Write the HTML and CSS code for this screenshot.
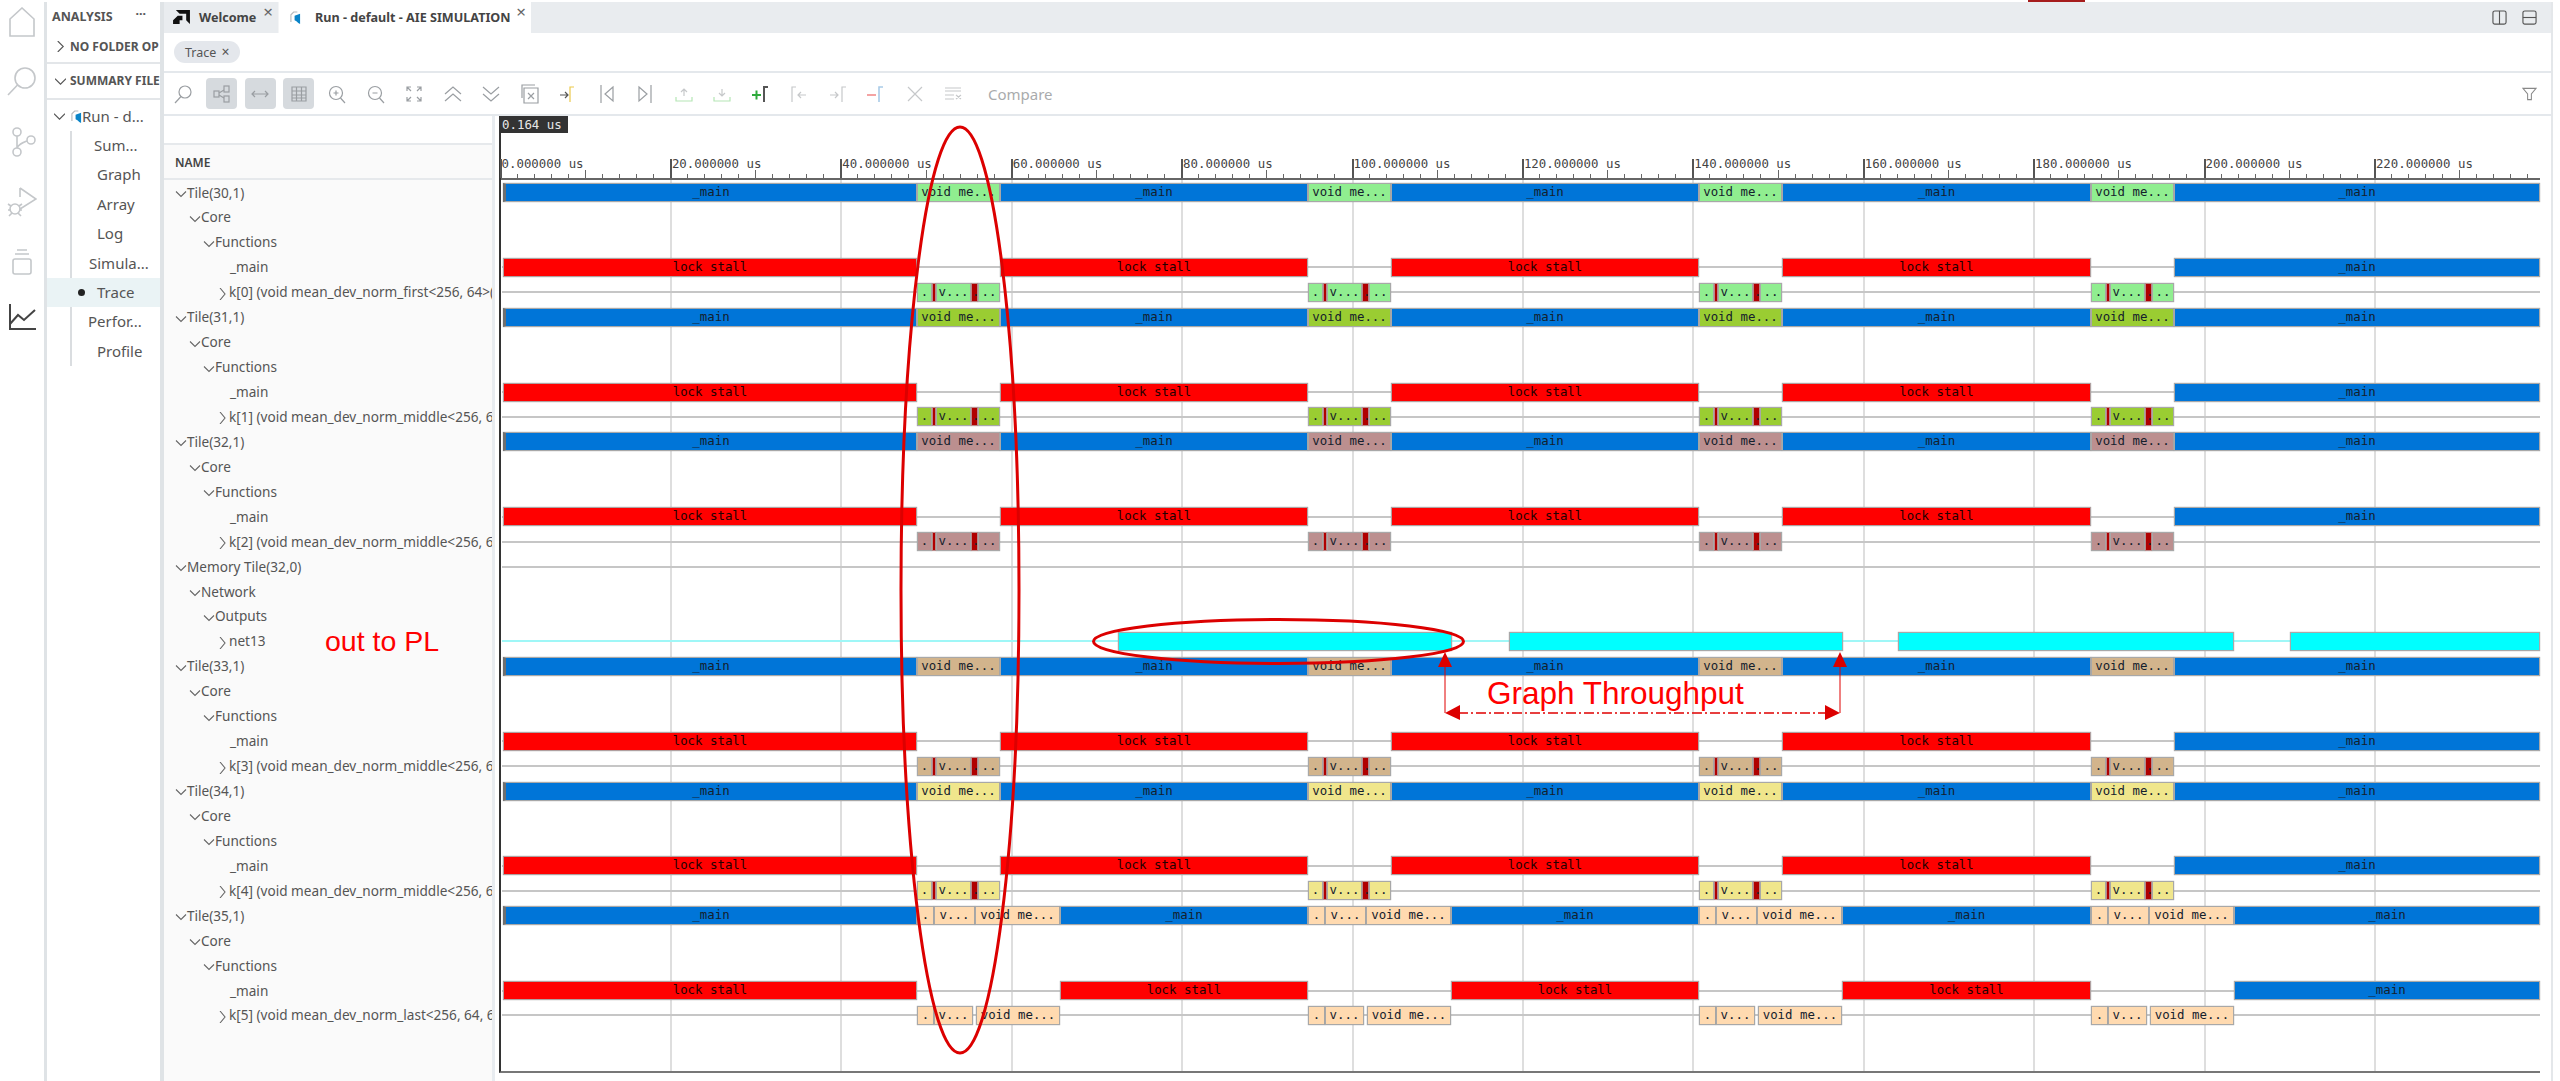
FILE: index.html
```html
<!DOCTYPE html>
<html lang="en">
<head>
    <meta charset="UTF-8">
    <title>Run - default - AIE SIMULATION</title>
    <link rel="stylesheet" href="styles.css">
</head>
<body>
    <div class="strip"><span class="strip-mark"></span></div>

    <div class="app">
        <!-- activity bar -->
        <nav class="activity">
            <svg class="act-icon" viewBox="0 0 30 30"><path d="M3 12 15 1l12 11v17H3z"/></svg>
            <svg class="act-icon" viewBox="0 0 30 30"><circle cx="18" cy="11" r="10"/><path d="M10.500 18 1 28"/></svg>
            <svg class="act-icon" viewBox="0 0 30 30"><circle cx="10" cy="5" r="4"/><circle cx="10" cy="25" r="4"/><circle cx="24" cy="13" r="4"/><path d="M10 9v12M20 14c-5 2-8 3-10 7"/></svg>
            <svg class="act-icon" viewBox="0 0 30 30"><path d="M13 1l16 11-16 10M13 1v9"/><circle cx="8" cy="22" r="5"/><path d="M1 17l3 2M1 23h3M2 29l3-3M15 17l-3 2M15 23h-3M14 29l-3-3"/></svg>
            <svg class="act-icon" viewBox="0 0 30 30"><rect x="6" y="12" width="18" height="15" rx="2"/><path d="M8 7h14M10 3h10"/></svg>
            <svg class="act-icon act-on" viewBox="0 0 30 30"><path d="M3 1v25h26M3 21l8-9 6 5 11-10"/></svg>
        </nav>

        <!-- explorer -->
        <aside class="side">
            <div class="side-title"><span>ANALYSIS</span><span class="side-more">···</span></div>
            <div class="side-sec side-sec-a">
                <svg class="chev" viewBox="0 0 12 12"><path d="M3 0l6 6-6 6"/></svg>
                <span class="sec-name">NO FOLDER OP</span>
            </div>
            <div class="side-sec side-sec-b">
                <svg class="chev" viewBox="0 0 12 12"><path d="M0 3l6 6 6-6"/></svg>
                <span class="sec-name">SUMMARY FILE</span>
            </div>
            <div class="side-run">
                <svg class="chev" viewBox="0 0 12 12"><path d="M0 3l6 6 6-6"/></svg>
                <svg class="run-icon" viewBox="0 0 12 14"><path class="run-back" d="M1 12V4l3-3h4"/><path class="run-blue" d="M5 5l6-2v11l-2-1-2-2-2-1z"/></svg>
                <span>Run - d...</span>
            </div>
            <ul class="side-list">
                <li class="side-item i-sum">Sum...</li>
                <li class="side-item">Graph</li>
                <li class="side-item">Array</li>
                <li class="side-item">Log</li>
                <li class="side-item i-sim">Simula...</li>
                <li class="side-item is-active">Trace</li>
                <li class="side-item i-per">Perfor...</li>
                <li class="side-item">Profile</li>
            </ul>
        </aside>

        <main class="main">
            <div class="tabs">
                <div class="tab tab-welcome">
                    <svg class="amd" viewBox="0 0 18 16"><path d="M3 0h15v15l-4-4V4H7z"/><path d="M0 11l5-5h5v5l-3 0v4H0z"/></svg>
                    <span>Welcome</span>
                    <span class="tab-x">×</span>
                </div>
                <div class="tab tab-run">
                    <svg class="run-icon" viewBox="0 0 12 14"><path class="run-back" d="M1 12V4l3-3h4"/><path class="run-blue" d="M5 5l6-2v11l-2-1-2-2-2-1z"/></svg>
                    <span>Run - default - AIE SIMULATION</span>
                    <span class="tab-x">×</span>
                </div>
                <div class="tab-actions">
                    <svg class="tab-act" viewBox="0 0 16 16"><rect x="1" y="1" width="14" height="14" rx="2"/><path d="M8 1v14"/></svg>
                    <svg class="tab-act" viewBox="0 0 16 16"><rect x="1" y="1" width="14" height="14" rx="2"/><path d="M1 8h14"/></svg>
                </div>
            </div>

            <div class="subtabs">
                <div class="chip">Trace <span class="chip-x">×</span></div>
            </div>

            <div class="toolbar">
                <button class="tool"><svg viewBox="0 0 20 20"><circle cx="12" cy="8" r="6"/><path d="M8 12.500 2 19"/></svg></button>
                <button class="tool is-on"><svg viewBox="0 0 20 20"><rect x="2" y="7" width="5" height="6"/><rect x="12" y="2" width="5" height="6"/><rect x="12" y="12" width="5" height="6"/><path d="M7 9l5-3M7 11l5 3"/></svg></button>
                <button class="tool is-on"><svg viewBox="0 0 20 20"><path d="M2 10h16M5 7l-3 3 3 3M15 7l3 3-3 3"/></svg></button>
                <button class="tool is-on"><svg viewBox="0 0 20 20"><path d="M3 3h14v14H3zM3 7h14M3 11h14M3 14h14M7.500 3v14M12.500 3v14"/></svg></button>
                <button class="tool"><svg viewBox="0 0 20 20"><circle cx="9" cy="9" r="6.500"/><path d="M13.500 14 18 19M9 6.500v5M6.500 9h5"/></svg></button>
                <button class="tool"><svg viewBox="0 0 20 20"><circle cx="9" cy="9" r="6.500"/><path d="M13.500 14 18 19M6.500 9h5"/></svg></button>
                <button class="tool"><svg viewBox="0 0 20 20"><path d="M3 7V3h4M13 3h4v4M3 13v4h4M17 13v4h-4M3 3l4 4M17 3l-4 4M3 17l4-4M17 17l-4-4"/></svg></button>
                <button class="tool"><svg viewBox="0 0 20 20"><path d="M2 10l8-7 8 7M2 17l8-7 8 7"/></svg></button>
                <button class="tool"><svg viewBox="0 0 20 20"><path d="M2 3l8 7 8-7M2 10l8 7 8-7"/></svg></button>
                <button class="tool"><svg viewBox="0 0 20 20"><path d="M2 14V1h13M4 19V4h14v15zM8 9l6 6M14 9l-6 6"/></svg></button>
                <button class="tool"><svg viewBox="0 0 20 20"><path class="ink" d="M2 11h8M7 8l3 3-3 3"/><path class="yel" d="M12 18V3h4"/></svg></button>
                <button class="tool"><svg viewBox="0 0 20 20"><path d="M4 1v18M16 3 8 10l8 7z"/></svg></button>
                <button class="tool"><svg viewBox="0 0 20 20"><path d="M16 1v18M4 3l8 7-8 7z"/></svg></button>
                <button class="tool is-off"><svg viewBox="0 0 20 20"><path class="grn" d="M2 13v4h16v-4"/><path d="M10 12V5M7 8l3-3 3 3"/></svg></button>
                <button class="tool is-off"><svg viewBox="0 0 20 20"><path class="grn" d="M2 13v4h16v-4"/><path d="M10 5v7M7 9l3 3 3-3"/></svg></button>
                <button class="tool"><svg viewBox="0 0 20 20"><path class="grn-b" d="M1 11h9M5.500 6.500v9"/><path class="ink thick" d="M13 18V3h4"/></svg></button>
                <button class="tool is-off"><svg viewBox="0 0 20 20"><path d="M3 18V3h4M17 11H9M12 8l-3 3 3 3"/></svg></button>
                <button class="tool is-off"><svg viewBox="0 0 20 20"><path d="M2 11h8M7 8l3 3-3 3M14 18V3h4"/></svg></button>
                <button class="tool is-off"><svg viewBox="0 0 20 20"><path class="red" d="M1 11h9"/><path class="blu" d="M13 18V3h4"/></svg></button>
                <button class="tool is-off"><svg viewBox="0 0 20 20"><path d="M3 3l14 14M17 3 3 17"/></svg></button>
                <button class="tool is-off"><svg viewBox="0 0 20 20"><path d="M2 4h16M2 7h16M2 11h9M2 15h9M13 11l5 4M18 11l-5 4"/></svg></button>
                <span class="compare">Compare</span>
                <svg class="filter" viewBox="0 0 16 14"><path d="M1 1h14L10 7v6H6V7z"/></svg>
            </div>

            <div class="trace">
                <div class="names">
                    <div class="names-blank"></div>
                    <div class="names-head">NAME</div>
                    <div id="tree"></div>
                </div>
                <div class="wave">
                    <div class="plot">
                        <div class="stamp">0.164 us</div>
                        <div class="ruler" id="ruler"></div>
                        <div id="grid"></div>
                        <div id="rows"></div>
                    </div>
                </div>
            </div>
        </main>
    </div>

    <!-- hand drawn notes on top of the capture -->
    <svg class="notes" viewBox="0 0 2560 1081">
        <ellipse class="note-oval" cx="960" cy="590" rx="59" ry="463"/>
        <ellipse class="note-oval" cx="1278.500" cy="641.500" rx="185" ry="22"/>
        <path class="note-thin" d="M1445 660V713M1840 660V713"/>
        <path class="note-dash" d="M1458 713H1828"/>
        <path class="note-head" d="M1445 652l-7 15h14zM1840 652l-7 15h14zM1445 713l15-8v15zM1840 713l-15-8v15z"/>
        <text class="note-text note-big" x="1487" y="704">Graph Throughput</text>
        <text class="note-text note-small" x="325" y="651">out to PL</text>
    </svg>

    <script src="app.js"></script>
</body>
</html>
```

FILE: styles.css
```css
* {
    box-sizing: border-box;
}

html, body {
    margin: 0;
    height: 100%;
}

body {
    width: 2560px;
    height: 1081px;
    overflow: hidden;
    position: relative;
    background-color: #fff;
    font-family: "Noto Sans", sans-serif;
    color: #555;
    display: flex;
    flex-direction: column;
}

.strip {
    height: 2px;
    flex: none;
}

.strip-mark {
    display: block;
    width: 57px;
    height: 2px;
    margin-left: 2028px;
    background-color: #a61c1c;
}

.app {
    flex: 1;
    display: flex;
    min-height: 0;
}

/* activity bar */
.activity {
    width: 47px;
    flex: none;
    border-right: 3px solid #dfe3e6;
    display: flex;
    flex-direction: column;
    align-items: center;
    gap: 30px;
    padding-top: 5px;
}

.act-icon {
    width: 30px;
    height: 30px;
    fill: none;
    stroke: #c4c7ca;
    stroke-width: 1.6;
}

.act-on {
    stroke: #444;
    stroke-width: 2;
    margin-top: -4px;
}

/* explorer */
.side {
    width: 117px;
    flex: none;
    border-right: 4px solid #dfe3e6;
    overflow: hidden;
}

.side-title {
    height: 29px;
    padding: 0 0 0 5px;
    display: flex;
    align-items: center;
    font-size: 12.500px;
    font-weight: 700;
    line-height: 16px;
    color: #555;
}

.side-more {
    margin-left: 23px;
    margin-top: -5px;
    letter-spacing: 0;
}

.side-sec {
    display: flex;
    align-items: center;
    gap: 4px;
    padding-left: 8px;
    font-size: 12px;
    font-weight: 700;
    line-height: 16px;
    white-space: nowrap;
    overflow: hidden;
    border-bottom: 2px solid #e3e6e9;
}

.side-sec-a {
    height: 33px;
}

.side-sec-b {
    height: 36px;
}

.chev {
    width: 11px;
    height: 11px;
    flex: none;
    fill: none;
    stroke: #555;
    stroke-width: 1.200;
}

.side-run {
    height: 31px;
    padding-left: 7px;
    padding-top: 1px;
    display: flex;
    align-items: center;
    gap: 6px;
    font-size: 15px;
}

.run-icon {
    width: 11px;
    height: 13px;
    flex: none;
}

.side-run .run-icon {
    margin-right: -6px;
}

.run-back {
    fill: none;
    stroke: #b5b8bb;
    stroke-width: 1.200;
}

.run-blue {
    fill: #0a84c8;
}

.side-list {
    list-style: none;
    margin: 0 0 0 23px;
    padding: 0;
    border-left: 2px solid #dadde0;
    font-size: 15px;
    height: 235px;
}

.side-item {
    height: 29.400px;
    line-height: 29.400px;
    padding-left: 25px;
    white-space: nowrap;
    position: relative;
}

.i-sum { padding-left: 22px; }
.i-sim { padding-left: 17px; }
.i-per { padding-left: 16px; }

.side-item.is-active {
    background-color: #eaf3f5;
    margin-left: -25px;
    padding-left: 50px;
}

/* selected marker */
.side-item.is-active::before {
    content: "";
    position: absolute;
    left: 31px;
    top: 11px;
    width: 7px;
    height: 7px;
    border-radius: 50%;
    background-color: #222;
}

/* main area */
.main {
    width: 2389px;
    flex: none;
    border-right: 2px solid #e4e7ea;
    display: flex;
    flex-direction: column;
}

.tabs {
    height: 31px;
    flex: none;
    display: flex;
    background-color: #e9ecef;
}

.tab {
    display: flex;
    align-items: center;
    font-size: 12.600px;
    font-weight: 700;
    color: #444;
    position: relative;
}

.tab-welcome {
    width: 115px;
    padding-left: 9px;
    gap: 9px;
    border-right: 1px solid #f4f5f6;
}

.tab-run {
    width: 252px;
    background-color: #fff;
    padding-left: 11px;
    gap: 14px;
}

.amd {
    width: 17px;
    height: 15px;
    fill: #111;
}

.tab-x {
    position: absolute;
    right: 5px;
    top: -2px;
    font-size: 17px;
    font-weight: 400;
    color: #666;
}

.tab-actions {
    margin-left: auto;
    display: flex;
    align-items: center;
    gap: 15px;
    padding-right: 14px;
}

.tab-act {
    width: 15px;
    height: 15px;
    fill: none;
    stroke: #555;
    stroke-width: 1.200;
}

.subtabs {
    height: 40px;
    flex: none;
    padding: 8px 0 0 10px;
    border-bottom: 2px solid #e4e8ec;
}

.chip {
    width: 66px;
    height: 22px;
    border-radius: 11px;
    background-color: #e4e7ec;
    font-size: 12.500px;
    line-height: 22px;
    padding-left: 11px;
    color: #555;
}

.chip-x {
    font-size: 14px;
    margin-left: 2px;
}

.toolbar {
    height: 43px;
    flex: none;
    display: flex;
    align-items: center;
    gap: 7.500px;
    padding-left: 3.500px;
    border-bottom: 2px solid #e4e8ec;
}

.tool {
    width: 31px;
    height: 31px;
    flex: none;
    padding: 0;
    border: 0;
    border-radius: 4px;
    background: none;
    display: flex;
    align-items: center;
    justify-content: center;
}

.tool.is-on {
    background-color: #d6dade;
}

.tool svg {
    width: 20px;
    height: 20px;
    fill: none;
    stroke: #9a9ea2;
    stroke-width: 1.200;
}

.tool.is-off svg {
    stroke: #c6c8ca;
}

.tool svg .ink { stroke: #555; }
.tool svg .thick { stroke-width: 2; }
.tool svg .yel { stroke: #ecc94b; }
.tool svg .grn { stroke: #b5e6b5; }
.tool svg .grn-b { stroke: #2eaa3c; stroke-width: 2; }
.tool svg .red { stroke: #f4a3a3; stroke-width: 2; }
.tool svg .blu { stroke: #a9cbe8; stroke-width: 1.600; }

.compare {
    margin-left: 12px;
    font-size: 15px;
    color: #a9abad;
}

.filter {
    margin-left: auto;
    margin-right: 14px;
    width: 15px;
    height: 14px;
    fill: none;
    stroke: #888;
    stroke-width: 1.100;
}

/* trace view */
.trace {
    flex: 1;
    display: flex;
    min-height: 0;
}

.names {
    width: 331px;
    flex: none;
    background-color: #fafafa;
    border-right: 3px solid #e8ecf0;
    overflow: hidden;
}

.names-blank {
    height: 29px;
    background-color: #fff;
    border-bottom: 2px solid #e6e9ec;
}

.names-head {
    height: 35px;
    line-height: 35px;
    padding-left: 11px;
    font-size: 12px;
    font-weight: 600;
    color: #444;
    border-bottom: 2px solid #e6e9ec;
}

.node {
    height: 24.950px;
    line-height: 24.950px;
    display: flex;
    align-items: center;
    white-space: nowrap;
    font-size: 13.600px;
    color: #555;
    overflow: hidden;
    padding-top: 1px;
}

.depth-0 { padding-left: 11px; }
.depth-1 { padding-left: 25px; }
.depth-2 { padding-left: 39px; }
.depth-3 { padding-left: 54px; }

.node-chev {
    width: 12px;
    height: 12px;
    flex: none;
    fill: none;
    stroke: #666;
    stroke-width: 1.100;
    margin-top: 2px;
}

.node-chev-r {
    width: 9px;
    margin-right: 2px;
}

.node-gap {
    width: 12px;
    flex: none;
}

.wave {
    flex: 1;
    min-width: 0;
}

/* x values in app.js are page pixels minus the plot origin */
.plot {
    position: relative;
    width: 2041px;
    height: 957px;
    margin-left: 4px;
    border-left: 2px solid #333;
    border-bottom: 2px solid #777;
    font-family: "DejaVu Sans Mono", monospace;
    font-size: 12.400px;
}

.stamp {
    position: absolute;
    left: -2px;
    top: 0;
    width: 69px;
    height: 17px;
    line-height: 17px;
    padding-left: 3px;
    background-color: #333;
    color: #e8e8e8;
    white-space: nowrap;
}

.ruler {
    position: relative;
    height: 64px;
    border-bottom: 2px solid #666;
}

.tick {
    position: absolute;
    bottom: 0;
    width: 1px;
    height: 4px;
    background-color: #666;
}

.tick-mid {
    height: 8px;
}

.tick-major {
    width: 2px;
    height: 19px;
    background-color: #555;
}

.tick-label {
    position: absolute;
    top: 40px;
    color: #444;
    white-space: nowrap;
}

.grid-line {
    position: absolute;
    top: 64px;
    bottom: 0;
    width: 2px;
    background-color: #dedede;
}

.row {
    position: relative;
    height: 24.950px;
}

.wire {
    position: absolute;
    left: 1px;
    right: 0;
    top: 11.500px;
    height: 2px;
    background-color: #c6c6c6;
}

.wire-net {
    background-color: #9ff7f7;
}

.bar {
    position: absolute;
    top: 3px;
    height: 19px;
    line-height: 15px;
    border: 1px solid #a8a8a8;
    box-shadow: 0 0 1px #999;
    text-align: center;
    white-space: nowrap;
    overflow: hidden;
    color: #14202c;
}

.bar-main { background-color: #0075d8; }
.bar-first { border-left: 3px solid #6f6f6f; }
.bar-lock { background-color: #f00; border-color: #b0a0a0; color: #200; }
.bar-net { background-color: #0ff; }
.bar-stop { background-color: #b00000; border-color: #b88; }

.c-30 { background-color: #90ee90; }
.c-31 { background-color: #9acd32; }
.c-32 { background-color: #bc8f8f; }
.c-33 { background-color: #d2b48c; }
.c-34 { background-color: #f0e68c; }
.c-35 { background-color: #ffdab0; }

/* notes */
.notes {
    position: absolute;
    left: 0;
    top: 0;
    width: 2560px;
    height: 1081px;
    pointer-events: none;
}

.note-oval {
    fill: none;
    stroke: #dc0000;
    stroke-width: 3;
}

.note-thin {
    fill: none;
    stroke: #e00000;
    stroke-width: 1;
}

.note-dash {
    fill: none;
    stroke: #e00000;
    stroke-width: 1.500;
    stroke-dasharray: 10 3 2 3;
}

.note-head {
    fill: #dc0000;
}

.note-text {
    fill: #f00;
    font-family: "Liberation Sans", sans-serif;
}

.note-big {
    font-size: 31.500px;
}

.note-small {
    font-size: 28.500px;
}
```

FILE: app.js
```js
// plot origin in page pixels, all x values below are page pixels
var ORIGIN = 501;
var US = 8.52;
var ZERO = 499.5;

// start of each iteration of the graph
var STARTS = [917, 1308, 1699, 2091];
var WIDTH = 83;
var END = 2540;

var CHEV_D = '<svg class="node-chev" viewBox="0 0 12 12"><path d="M1 3.500l5 5 5-5"/></svg>';
var CHEV_R = '<svg class="node-chev node-chev-r" viewBox="0 0 9 12"><path d="M2 0l5 6-5 6"/></svg>';

var tree = document.getElementById('tree');
var rows = document.getElementById('rows');
var ruler = document.getElementById('ruler');
var grid = document.getElementById('grid');

function place(el, x0, x1) {
    el.style.left = (x0 - ORIGIN) + 'px';
    if (x1 !== undefined) {
        el.style.width = (x1 - x0) + 'px';
    }
}

function addNode(depth, label, arrow) {
    var node = document.createElement('div');
    node.className = 'node depth-' + depth;
    var head = '<span class="node-gap"></span>';
    if (arrow === 'down') head = CHEV_D;
    if (arrow === 'right') head = CHEV_R;
    node.innerHTML = head + '<span></span>';
    node.lastChild.textContent = label;
    tree.appendChild(node);
}

function addRow() {
    var row = document.createElement('div');
    row.className = 'row';
    rows.appendChild(row);
    return row;
}

function addBar(row, cls, x0, x1, label) {
    var bar = document.createElement('div');
    bar.className = 'bar ' + cls;
    bar.textContent = label || '';
    place(bar, x0, x1);
    row.appendChild(bar);
}

function addWire(row, cls) {
    var wire = document.createElement('div');
    wire.className = 'wire ' + (cls || '');
    row.appendChild(wire);
}

// last tile has a longer kernel, it runs up to 1060
function tileRows(id, kernel, last) {
    var color = 'c-' + id;
    var span = last ? 143 : WIDTH;

    addNode(0, 'Tile(' + id + ',1)', 'down');
    addNode(1, 'Core', 'down');
    addNode(2, 'Functions', 'down');
    addNode(3, '_main');
    addNode(3, kernel, 'right');

    // tile row
    var top = addRow();
    var x = 503;
    STARTS.forEach(function (s, i) {
        addBar(top, 'bar-main' + (i === 0 ? ' bar-first' : ''), x, s, '_main');
        if (last) {
            addBar(top, color, s, s + 17, '.');
            addBar(top, color, s + 17, s + 58, 'v...');
            addBar(top, color, s + 58, s + span, 'void me...');
        } else {
            addBar(top, color, s, s + span, 'void me...');
        }
        x = s + span;
    });
    addBar(top, 'bar-main', x, END, '_main');

    addRow();
    addRow();

    // _main row
    var stall = addRow();
    addWire(stall);
    x = 503;
    STARTS.forEach(function (s) {
        addBar(stall, 'bar-lock', x, s, 'lock stall');
        x = s + span;
    });
    addBar(stall, 'bar-main', x, END, '_main');

    // kernel row
    var kern = addRow();
    addWire(kern);
    STARTS.forEach(function (s) {
        if (last) {
            addBar(kern, color, s, s + 17, '.');
            addBar(kern, color, s + 17, s + 56, 'v...');
            addBar(kern, color, s + 59, s + span, 'void me...');
        } else {
            addBar(kern, color, s, s + 15, '.');
            addBar(kern, 'bar-stop', s + 15, s + 19);
            addBar(kern, color, s + 19, s + 54, 'v...');
            addBar(kern, 'bar-stop', s + 54, s + 61, '.');
            addBar(kern, color, s + 61, s + span, '..');
        }
    });
}

function memoryRows() {
    addNode(0, 'Memory Tile(32,0)', 'down');
    addNode(1, 'Network', 'down');
    addNode(2, 'Outputs', 'down');
    addNode(3, 'net13', 'right');

    addWire(addRow());
    addRow();
    addRow();

    var net = addRow();
    addWire(net, 'wire-net');
    [[1118, 1452], [1509, 1843], [1898, 2234], [2290, END]].forEach(function (b) {
        addBar(net, 'bar-net', b[0], b[1]);
    });
}

// time axis
for (var t = 0; t <= 239; t += 2) {
    var x = ZERO + US * t;
    var tick = document.createElement('div');
    tick.className = 'tick';
    if (t % 20 === 0) {
        tick.className += ' tick-major';
        var label = document.createElement('span');
        label.className = 'tick-label';
        label.textContent = t.toFixed(6) + ' us';
        place(label, x + 2);
        ruler.appendChild(label);
        if (t > 0) {
            var line = document.createElement('div');
            line.className = 'grid-line';
            place(line, x);
            grid.appendChild(line);
        }
    } else if (t % 10 === 0) {
        tick.className += ' tick-mid';
    }
    place(tick, x);
    ruler.appendChild(tick);
}

tileRows(30, 'k[0] (void mean_dev_norm_first<256, 64>(');
tileRows(31, 'k[1] (void mean_dev_norm_middle<256, 6');
tileRows(32, 'k[2] (void mean_dev_norm_middle<256, 6');
memoryRows();
tileRows(33, 'k[3] (void mean_dev_norm_middle<256, 6');
tileRows(34, 'k[4] (void mean_dev_norm_middle<256, 6');
tileRows(35, 'k[5] (void mean_dev_norm_last<256, 64, 6', true);
```
